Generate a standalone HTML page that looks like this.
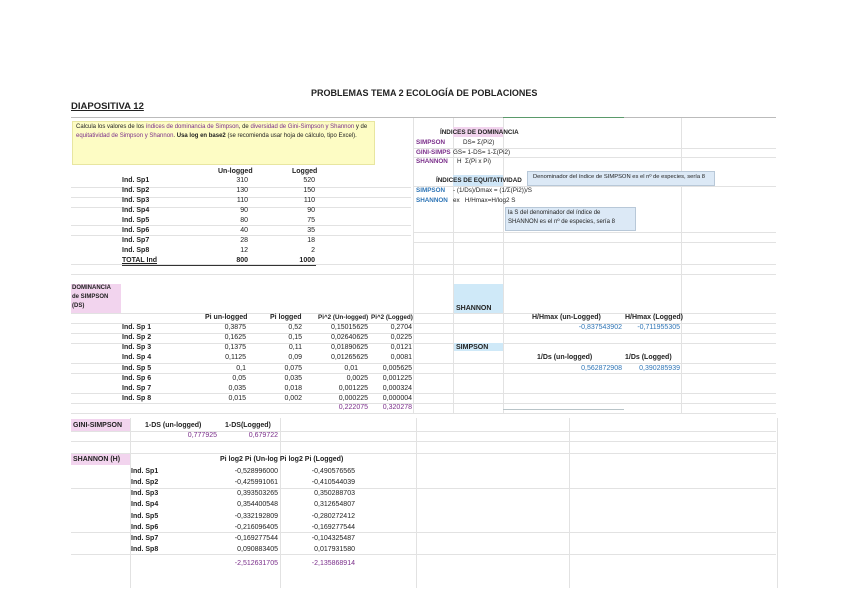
<!DOCTYPE html>
<html><head><meta charset="utf-8"><style>
body{margin:0;width:848px;height:599px;background:#fff;position:relative;overflow:hidden;font-family:"Liberation Sans",sans-serif;color:#222}
.t{position:absolute;white-space:nowrap;font-size:7px;line-height:9px}
.r{text-align:right}
.b{font-weight:bold}
.p{color:#7a2e8a}
.bl{color:#2e75b6}
.h{position:absolute;height:1px;background:#e2e2e2}
.v{position:absolute;width:1px;background:#e2e2e2}
.box{position:absolute}
.s{font-size:6.3px}
</style></head><body>
<div class="t b" style="left:311px;top:87px;font-size:9px;line-height:12px">PROBLEMAS TEMA 2 ECOLOGÍA DE POBLACIONES</div>
<div class="t b" style="left:71px;top:101px;font-size:9.5px;line-height:12px;text-decoration:underline">DIAPOSITIVA 12</div>
<div class="h" style="left:71px;top:117px;width:705px;background:#bbb"></div>
<div class="h" style="left:503px;top:117px;width:121px;background:#5a9a6a"></div>

<div class="v" style="left:413px;top:118px;height:296px"></div>
<div class="v" style="left:453px;top:118px;height:296px"></div>
<div class="v" style="left:503px;top:118px;height:296px"></div>
<div class="v" style="left:681px;top:118px;height:296px"></div>

<div class="box" style="left:72px;top:121px;width:301px;height:42px;background:#fdfcc4;border:1px solid #e8e6a0"></div>
<div class="t" style="left:76px;top:123px;font-size:6px;line-height:9px;width:295px;white-space:normal">Calcula los valores de los <span class="p">índices de dominancia de Simpson</span>, de <span class="p">diversidad de Gini-Simpson y Shannon</span> y de <span class="p">equitatividad de Simpson y Shannon</span>. <b>Usa log en base2</b> (se recomienda usar hoja de cálculo, tipo Excel).</div>

<div class="h" style="left:71px;top:187px;width:340px"></div>
<div class="h" style="left:71px;top:197px;width:340px"></div>
<div class="h" style="left:71px;top:207px;width:340px"></div>
<div class="h" style="left:71px;top:225px;width:340px"></div>
<div class="h" style="left:71px;top:235px;width:340px"></div>
<div class="h" style="left:71px;top:264px;width:705px"></div>
<div class="h" style="left:71px;top:274px;width:705px"></div>
<div class="h" style="left:413px;top:148px;width:363px"></div>
<div class="h" style="left:413px;top:157px;width:363px"></div>
<div class="h" style="left:413px;top:186px;width:363px"></div>
<div class="h" style="left:413px;top:232px;width:363px"></div>
<div class="h" style="left:413px;top:242px;width:363px"></div>

<div class="t b" style="left:218px;top:167px">Un-logged</div>
<div class="t b" style="left:292px;top:167px">Logged</div>
<div class="t b" style="left:122px;top:176px">Ind. Sp1</div><div class="t r" style="right:600px;top:176px">310</div><div class="t r" style="right:533px;top:176px">520</div>
<div class="t b" style="left:122px;top:186px">Ind. Sp2</div><div class="t r" style="right:600px;top:186px">130</div><div class="t r" style="right:533px;top:186px">150</div>
<div class="t b" style="left:122px;top:196px">Ind. Sp3</div><div class="t r" style="right:600px;top:196px">110</div><div class="t r" style="right:533px;top:196px">110</div>
<div class="t b" style="left:122px;top:206px">Ind. Sp4</div><div class="t r" style="right:600px;top:206px">90</div><div class="t r" style="right:533px;top:206px">90</div>
<div class="t b" style="left:122px;top:216px">Ind. Sp5</div><div class="t r" style="right:600px;top:216px">80</div><div class="t r" style="right:533px;top:216px">75</div>
<div class="t b" style="left:122px;top:226px">Ind. Sp6</div><div class="t r" style="right:600px;top:226px">40</div><div class="t r" style="right:533px;top:226px">35</div>
<div class="t b" style="left:122px;top:236px">Ind. Sp7</div><div class="t r" style="right:600px;top:236px">28</div><div class="t r" style="right:533px;top:236px">18</div>
<div class="t b" style="left:122px;top:246px">Ind. Sp8</div><div class="t r" style="right:600px;top:246px">12</div><div class="t r" style="right:533px;top:246px">2</div>
<div class="t b" style="left:122px;top:256px;text-decoration:underline">TOTAL Ind</div><div class="t r b" style="right:600px;top:256px">800</div><div class="t r b" style="right:533px;top:256px">1000</div>
<div class="h" style="left:122px;top:265px;width:194px;background:#333"></div>

<div class="box" style="left:453px;top:127px;width:50px;height:10px;background:#f2d4ee"></div>
<div class="t b s" style="left:440px;top:128px">ÍNDICES DE DOMINANCIA</div>
<div class="t b p s" style="left:416px;top:138px">SIMPSON</div><div class="t s" style="left:463px;top:138px">DS= Σ(Pi2)</div>
<div class="t b p s" style="left:416px;top:148px">GINI-SIMPS</div><div class="t s" style="left:453px;top:148px">GS= 1-DS= 1-Σ(Pi2)</div>
<div class="t b p s" style="left:416px;top:157px">SHANNON</div><div class="t s" style="left:457px;top:157px">H &nbsp;Σ(Pi x Pi)</div>
<div class="box" style="left:453px;top:175px;width:50px;height:11px;background:#cfe6f7"></div>
<div class="t b s" style="left:436px;top:176px">ÍNDICES DE EQUITATIVIDAD</div>
<div class="t b bl s" style="left:416px;top:186px">SIMPSON</div><div class="t s" style="left:453px;top:186px">- (1/Ds)/Dmax = (1/Σ(Pi2))/S</div>
<div class="t b bl s" style="left:416px;top:196px">SHANNON</div><div class="t s" style="left:453px;top:196px">ex &nbsp;&nbsp;H/Hmax=H/log2 S</div>
<div class="box" style="left:527px;top:171px;width:186px;height:13px;background:#dce9f6;border:1px solid #b8c8d8"></div>
<div class="t" style="left:533px;top:173px;font-size:5.8px">Denominador del índice de SIMPSON es el nº de especies, sería 8</div>
<div class="box" style="left:505px;top:207px;width:129px;height:22px;background:#dce9f6;border:1px solid #b8c8d8"></div>
<div class="t" style="left:508px;top:209px;font-size:6px;line-height:9px">la S del denominador del índice de<br>SHANNON es el nº de especies, sería 8</div>

<div class="box" style="left:71px;top:284px;width:50px;height:29px;background:#f2d4ee"></div>
<div class="t b" style="left:72px;top:284px;font-size:6px;line-height:9px">DOMINANCIA<br>de SIMPSON<br>(DS)</div>
<div class="h" style="left:71px;top:313px;width:705px"></div>
<div class="h" style="left:71px;top:323px;width:705px"></div>
<div class="h" style="left:71px;top:333px;width:705px"></div>
<div class="h" style="left:71px;top:343px;width:705px"></div>
<div class="h" style="left:71px;top:363px;width:705px"></div>
<div class="h" style="left:71px;top:373px;width:705px"></div>
<div class="h" style="left:71px;top:393px;width:705px"></div>
<div class="h" style="left:71px;top:403px;width:705px"></div>
<div class="h" style="left:71px;top:413px;width:705px"></div>

<div class="t b" style="left:205px;top:313px">Pi un-logged</div>
<div class="t b" style="left:270px;top:313px">Pi logged</div>
<div class="t b s" style="left:318px;top:313px">Pi^2 (Un-logged)</div>
<div class="t b s" style="left:371px;top:313px">Pi^2 (Logged)</div>

<div class="t b" style="left:122px;top:323px">Ind. Sp 1</div><div class="t r" style="right:602px;top:323px">0,3875</div><div class="t r" style="right:546px;top:323px">0,52</div><div class="t r" style="right:480px;top:323px">0,15015625</div><div class="t r" style="right:436px;top:323px">0,2704</div>
<div class="t b" style="left:122px;top:333px">Ind. Sp 2</div><div class="t r" style="right:602px;top:333px">0,1625</div><div class="t r" style="right:546px;top:333px">0,15</div><div class="t r" style="right:480px;top:333px">0,02640625</div><div class="t r" style="right:436px;top:333px">0,0225</div>
<div class="t b" style="left:122px;top:343px">Ind. Sp 3</div><div class="t r" style="right:602px;top:343px">0,1375</div><div class="t r" style="right:546px;top:343px">0,11</div><div class="t r" style="right:480px;top:343px">0,01890625</div><div class="t r" style="right:436px;top:343px">0,0121</div>
<div class="t b" style="left:122px;top:353px">Ind. Sp 4</div><div class="t r" style="right:602px;top:353px">0,1125</div><div class="t r" style="right:546px;top:353px">0,09</div><div class="t r" style="right:480px;top:353px">0,01265625</div><div class="t r" style="right:436px;top:353px">0,0081</div>
<div class="t b" style="left:122px;top:364px">Ind. Sp 5</div><div class="t r" style="right:602px;top:364px">0,1</div><div class="t r" style="right:546px;top:364px">0,075</div><div class="t r" style="right:490px;top:364px">0,01</div><div class="t r" style="right:436px;top:364px">0,005625</div>
<div class="t b" style="left:122px;top:374px">Ind. Sp 6</div><div class="t r" style="right:602px;top:374px">0,05</div><div class="t r" style="right:546px;top:374px">0,035</div><div class="t r" style="right:480px;top:374px">0,0025</div><div class="t r" style="right:436px;top:374px">0,001225</div>
<div class="t b" style="left:122px;top:384px">Ind. Sp 7</div><div class="t r" style="right:602px;top:384px">0,035</div><div class="t r" style="right:546px;top:384px">0,018</div><div class="t r" style="right:480px;top:384px">0,001225</div><div class="t r" style="right:436px;top:384px">0,000324</div>
<div class="t b" style="left:122px;top:394px">Ind. Sp 8</div><div class="t r" style="right:602px;top:394px">0,015</div><div class="t r" style="right:546px;top:394px">0,002</div><div class="t r" style="right:480px;top:394px">0,000225</div><div class="t r" style="right:436px;top:394px">0,000004</div>
<div class="t r p" style="right:480px;top:403px">0,222075</div><div class="t r p" style="right:436px;top:403px">0,320278</div>

<div class="box" style="left:454px;top:284px;width:49px;height:29px;background:#cfe9f8"></div>
<div class="t b" style="left:456px;top:304px">SHANNON</div>
<div class="t b" style="left:532px;top:313px">H/Hmax (un-Logged)</div>
<div class="t b" style="left:625px;top:313px">H/Hmax (Logged)</div>
<div class="t r bl" style="right:226px;top:323px">-0,837543902</div>
<div class="t r bl" style="right:168px;top:323px">-0,711955305</div>
<div class="box" style="left:454px;top:343px;width:49px;height:8px;background:#cfe9f8"></div>
<div class="t b" style="left:456px;top:343px">SIMPSON</div>
<div class="t b" style="left:537px;top:353px">1/Ds (un-logged)</div>
<div class="t b" style="left:625px;top:353px">1/Ds (Logged)</div>
<div class="t r bl" style="right:226px;top:364px">0,562872908</div>
<div class="t r bl" style="right:168px;top:364px">0,390285939</div>
<div class="h" style="left:503px;top:409px;width:121px;background:#b8c4c8"></div>

<div class="v" style="left:130px;top:418px;height:170px"></div>
<div class="v" style="left:280px;top:418px;height:170px"></div>
<div class="v" style="left:416px;top:418px;height:170px"></div>
<div class="v" style="left:569px;top:418px;height:170px"></div>
<div class="v" style="left:777px;top:418px;height:170px"></div>
<div class="h" style="left:71px;top:431px;width:705px"></div>
<div class="h" style="left:71px;top:441px;width:705px"></div>
<div class="h" style="left:71px;top:453px;width:705px"></div>
<div class="h" style="left:71px;top:488px;width:705px"></div>
<div class="h" style="left:71px;top:532px;width:705px"></div>
<div class="h" style="left:71px;top:554px;width:705px"></div>
<div class="box" style="left:71px;top:419px;width:59px;height:12px;background:#f2d4ee"></div>
<div class="t b" style="left:73px;top:421px">GINI-SIMPSON</div>
<div class="t b" style="left:145px;top:421px">1-DS (un-logged)</div>
<div class="t b" style="left:225px;top:421px">1-DS(Logged)</div>
<div class="t r p" style="right:631px;top:431px">0,777925</div>
<div class="t r p" style="right:570px;top:431px">0,679722</div>
<div class="box" style="left:71px;top:454px;width:59px;height:11px;background:#f2d4ee"></div>
<div class="t b" style="left:73px;top:455px">SHANNON (H)</div>
<div class="t b" style="left:220px;top:455px">Pi log2 Pi (Un-log Pi log2 Pi (Logged)</div>

<div class="t b" style="left:131px;top:467px">Ind. Sp1</div><div class="t r" style="right:570px;top:467px">-0,528996000</div><div class="t r" style="right:493px;top:467px">-0,490576565</div>
<div class="t b" style="left:131px;top:478px">Ind. Sp2</div><div class="t r" style="right:570px;top:478px">-0,425991061</div><div class="t r" style="right:493px;top:478px">-0,410544039</div>
<div class="t b" style="left:131px;top:489px">Ind. Sp3</div><div class="t r" style="right:570px;top:489px">0,393503265</div><div class="t r" style="right:493px;top:489px">0,350288703</div>
<div class="t b" style="left:131px;top:500px">Ind. Sp4</div><div class="t r" style="right:570px;top:500px">0,354400548</div><div class="t r" style="right:493px;top:500px">0,312654807</div>
<div class="t b" style="left:131px;top:512px">Ind. Sp5</div><div class="t r" style="right:570px;top:512px">-0,332192809</div><div class="t r" style="right:493px;top:512px">-0,280272412</div>
<div class="t b" style="left:131px;top:523px">Ind. Sp6</div><div class="t r" style="right:570px;top:523px">-0,216096405</div><div class="t r" style="right:493px;top:523px">-0,169277544</div>
<div class="t b" style="left:131px;top:534px">Ind. Sp7</div><div class="t r" style="right:570px;top:534px">-0,169277544</div><div class="t r" style="right:493px;top:534px">-0,104325487</div>
<div class="t b" style="left:131px;top:545px">Ind. Sp8</div><div class="t r" style="right:570px;top:545px">0,090883405</div><div class="t r" style="right:493px;top:545px">0,017931580</div>
<div class="t r p" style="right:570px;top:559px">-2,512631705</div><div class="t r p" style="right:493px;top:559px">-2,135868914</div>
</body></html>
